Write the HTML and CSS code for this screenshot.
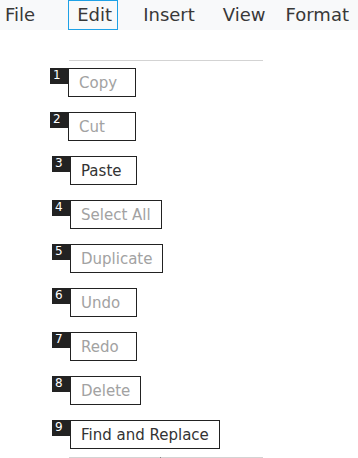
FILE: index.html
```html
<!DOCTYPE html>
<html lang="en">

<head>
    <meta charset="UTF-8">
    <meta name="viewport" content="width=device-width, initial-scale=1.0">
    <title>Edit menu</title>
    <link rel="stylesheet" href="styles.css">
</head>

<body>
    <div id="menubar">
        <div class="menuitem">File</div>
        <div class="menuitem active">Edit</div>
        <div class="menuitem">Insert</div>
        <div class="menuitem">View</div>
        <div class="menuitem">Format</div>
    </div>

    <div id="panel">
        <ul id="actions">
            <li class="action shift"><span class="num">1</span>Copy</li>
            <li class="action shift"><span class="num">2</span>Cut</li>
            <li class="action on"><span class="num">3</span>Paste</li>
            <li class="action"><span class="num">4</span>Select All</li>
            <li class="action"><span class="num">5</span>Duplicate</li>
            <li class="action"><span class="num">6</span>Undo</li>
            <li class="action"><span class="num">7</span>Redo</li>
            <li class="action"><span class="num">8</span>Delete</li>
            <li class="action on"><span class="num">9</span>Find and Replace</li>
        </ul>
        <div id="foot"><span class="tick"></span></div>
    </div>
</body>

</html>
```

FILE: styles.css
```css
* {
    box-sizing: border-box;
    margin: 0;
    padding: 0;
}

body {
    font-family: "DejaVu Sans", sans-serif;
    color: #333;
    background: #fff;
}

#menubar {
    display: flex;
    height: 30px;
    background-color: #f8f9fa;
    padding-left: 0;
}

.menuitem {
    font-size: 18px;
    line-height: 28px;
    padding: 0 8px;
    border: 1px solid transparent;
    color: #383838;
}

.menuitem:nth-child(1) { margin-left: -4px; width: 73px; }
.menuitem:nth-child(2) { width: 50px; }
.menuitem:nth-child(3) { margin-left: 16px; }
.menuitem:nth-child(4) { margin-left: 10px; }
.menuitem:nth-child(5) { margin-left: 2px; }

.menuitem.active {
    border-color: #1ea1e6;
}

#panel {
    width: 194px;
    margin: 30px 0 0 69px;
    border-top: 1px solid #d3d3d3;
}

#actions {
    list-style: none;
    padding: 7px 0 0 1px;
}

.action {
    position: relative;
    display: table;
    min-width: 67px;
    height: 29px;
    margin-bottom: 15px;
    padding: 2px 10px 0 10px;
    font-size: 15px;
    line-height: 25px;
    color: #a2a2a2;
    border: 1px solid #222;
}

.action.shift {
    margin-left: -2px;
    min-width: 68px;
}

.action.on {
    color: #333;
}

.num {
    position: absolute;
    left: -19px;
    top: -1px;
    width: 18px;
    height: 16px;
    background-color: #222;
    color: #fff;
    font-size: 12px;
    line-height: 15px;
    padding-left: 3px;
}

#foot {
    position: relative;
    margin-top: -7px;
    border-top: 1px solid #d3d3d3;
    height: 10px;
}

.tick {
    position: absolute;
    left: 91px;
    top: -1px;
    width: 1px;
    height: 3px;
    background-color: #888;
}
```
